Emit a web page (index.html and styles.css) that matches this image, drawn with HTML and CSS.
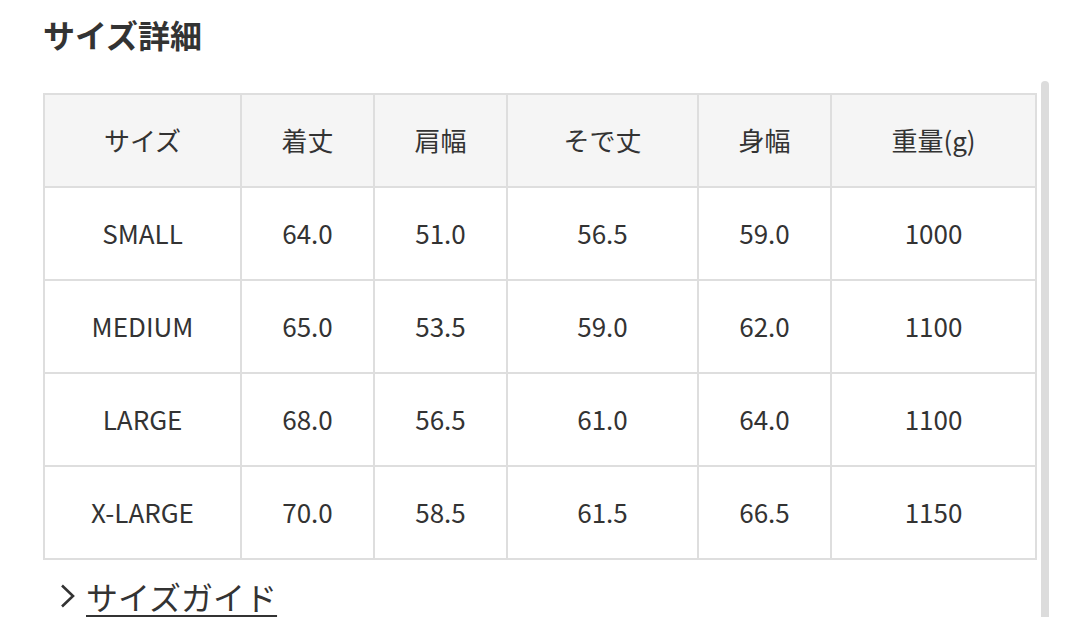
FILE: index.html
```html
<!DOCTYPE html>
<html lang="ja">
<head>
<meta charset="utf-8">
<title>サイズ詳細</title>
<link rel="stylesheet" href="styles.css">
</head>
<body>
<main class="page">
  <h2 class="title">サイズ詳細</h2>
  <div class="size-table" role="table">
    <div class="cell head">サイズ</div>
    <div class="cell head">着丈</div>
    <div class="cell head">肩幅</div>
    <div class="cell head">そで丈</div>
    <div class="cell head">身幅</div>
    <div class="cell head">重量(g)</div>

    <div class="cell">SMALL</div>
    <div class="cell">64.0</div>
    <div class="cell">51.0</div>
    <div class="cell">56.5</div>
    <div class="cell">59.0</div>
    <div class="cell">1000</div>

    <div class="cell">MEDIUM</div>
    <div class="cell">65.0</div>
    <div class="cell">53.5</div>
    <div class="cell">59.0</div>
    <div class="cell">62.0</div>
    <div class="cell">1100</div>

    <div class="cell">LARGE</div>
    <div class="cell">68.0</div>
    <div class="cell">56.5</div>
    <div class="cell">61.0</div>
    <div class="cell">64.0</div>
    <div class="cell">1100</div>

    <div class="cell">X-LARGE</div>
    <div class="cell">70.0</div>
    <div class="cell">58.5</div>
    <div class="cell">61.5</div>
    <div class="cell">66.5</div>
    <div class="cell">1150</div>
  </div>
  <a class="guide" href="#">
    <svg class="chev" width="16" height="24" viewBox="0 0 16 24" aria-hidden="true">
      <polyline points="2,1.5 13,12 2,22.5" fill="none" stroke="#333" stroke-width="2.6"/>
    </svg>
    <span class="guide-text">サイズガイド</span>
  </a>
</main>
<div class="scrollbar"></div>
</body>
</html>
```
FILE: styles.css
```css
html, body {
  margin: 0;
  padding: 0;
  background: #fff;
  overflow: hidden;
}
body {
  font-family: "Noto Sans CJK JP", "Noto Sans", sans-serif;
  color: #333;
  width: 1080px;
  height: 617px;
  position: relative;
}
.page {
  padding: 10px 0 0 43px;
}
.title {
  margin: 0;
  font-size: 32px;
  font-weight: 700;
  line-height: 48px;
  color: #333;
}
.size-table {
  margin-top: 35px;
  display: grid;
  grid-template-columns: 195px 131px 131px 189px 131px 203px;
  grid-auto-rows: 91px;
  gap: 2px;
  padding: 2px;
  background: #dedede;
  width: max-content;
}
.cell {
  background: #fff;
  display: flex;
  align-items: center;
  justify-content: center;
  font-size: 26px;
  line-height: 38px;
  padding-bottom: 2px;
  color: #333;
}
.cell.head {
  background: #f5f5f5;
}
.guide {
  margin-top: 12px;
  display: flex;
  align-items: center;
  gap: 10px;
  padding-left: 17px;
  height: 48px;
  color: #333;
  text-decoration: none;
  width: max-content;
}
.chev {
  display: block;
}
.guide-text {
  font-size: 32px;
  line-height: 48px;
  text-decoration: underline;
  text-decoration-thickness: 3px;
  text-underline-offset: 5px;
}
.scrollbar {
  position: absolute;
  left: 1041px;
  top: 81px;
  width: 8px;
  bottom: 0;
  background: #dcdcdc;
  border-radius: 4px 4px 0 0;
}
```
